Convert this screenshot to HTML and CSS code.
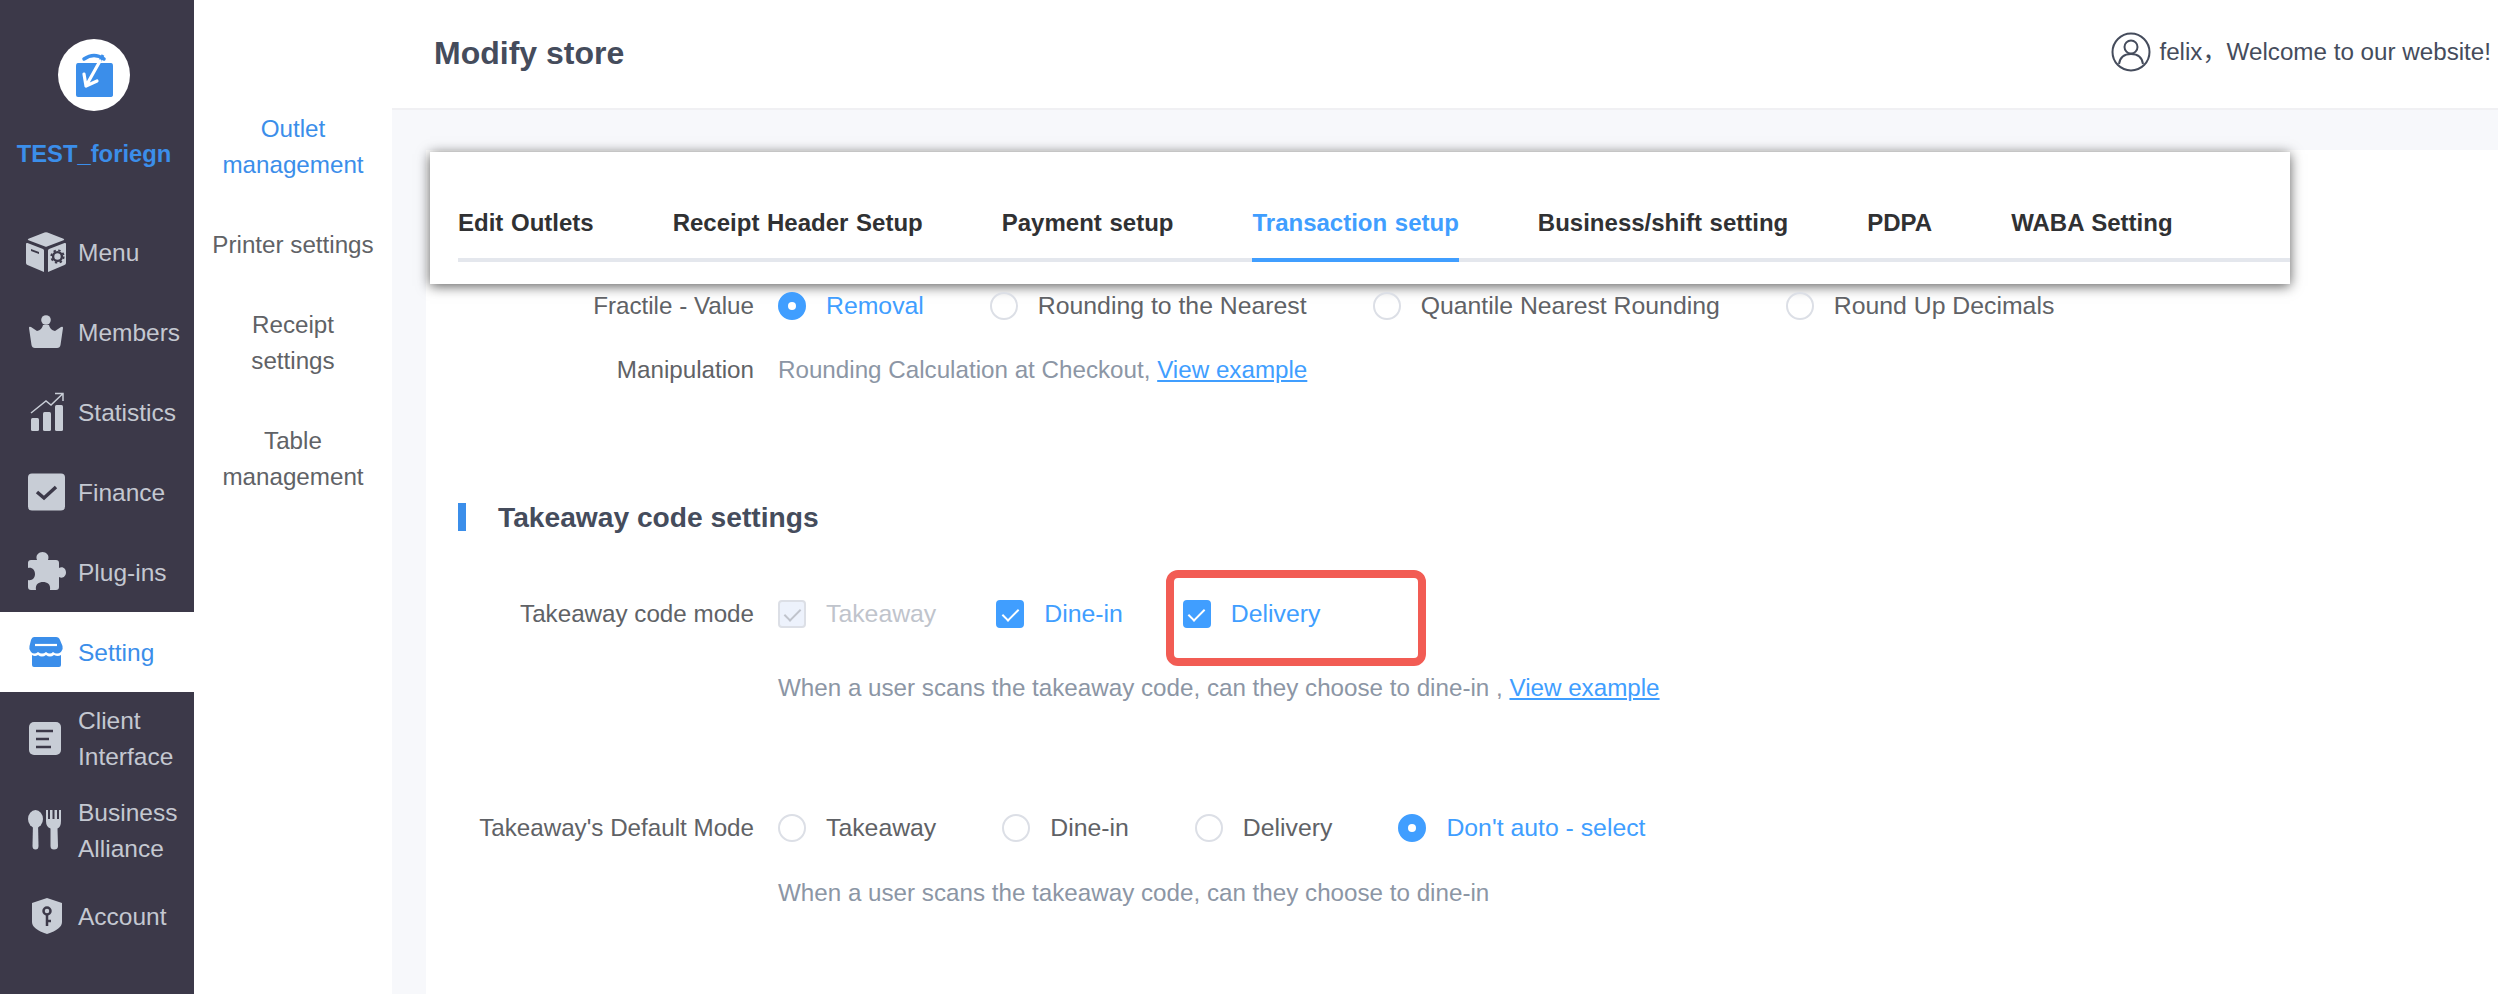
FILE: index.html
```html
<!DOCTYPE html>
<html lang="en">

<head>
    <meta charset="UTF-8">
    <meta name="viewport" content="width=device-width, initial-scale=1.0">
    <title>Modify store</title>
    <link rel="stylesheet" href="styles.css">
</head>

<body>
    <div class="sidebar">
        <div class="brand">
            <div class="brand-logo">
                <svg width="72" height="72" viewBox="0 0 72 72">
                    <path d="M26 20 Q36 13 46 20" fill="none" stroke="#3b8eea" stroke-width="3.5" stroke-linecap="round" />
                    <path d="M20 24 H53 Q55 24 55 27 V56 Q55 58 52 58 H20 Q18 58 18 56 V27 Q18 24 20 24 Z" fill="#3b8eea" />
                    <path d="M45 16 L42 22" stroke="#3b8eea" stroke-width="3" fill="none" />
                    <path d="M42 22 L28 47 M26 35 L28 47 L39 42" stroke="#fff" stroke-width="3.2" fill="none" stroke-linecap="round" stroke-linejoin="round" />
                </svg>
            </div>
            <div class="brand-name">TEST_foriegn</div>
        </div>

        <a class="side-item">
            <svg class="side-icon" viewBox="0 0 40 40">
                <path d="M18.5 .6 Q20 0 21.500 .6 L37.500 6.800 Q39 7.500 37.500 8.200 L21 14.500 Q20 15 19 14.500 L2.500 8.200 Q1 7.500 2.500 6.800 Z" />
                <path fill-rule="evenodd" d="M0 12 Q0 10.500 1.500 11 L17 17 Q18 17.500 18 18.500 V40 L1.500 33 Q0 32.500 0 31 Z M5 17 L5 19 L13 22 L13 20 Z" />
                <path d="M22 18.500 Q22 17.500 23 17 L38.500 11 Q40 10.500 40 12 V31 Q40 32.500 38.500 33 L22 40 Z" />
                <circle cx="31.500" cy="24.500" r="4.400" fill="none" stroke="#3c3949" stroke-width="2.400" />
                <circle cx="31.500" cy="24.500" r="6.200" fill="none" stroke="#3c3949" stroke-width="1.800" stroke-dasharray="2.400 2.470" />
            </svg>
            <span>Menu</span>
        </a>
        <a class="side-item">
            <svg class="side-icon" viewBox="0 0 40 40">
                <circle cx="20" cy="8" r="4.800" />
                <path d="M3 16 Q3 14 5 15 L11 19 Q16 18 17 13 H23 Q24 18 29 19 L35 15 Q37 14 37 16 L34.500 33 Q34 36 31 36 H9 Q6 36 5.500 33 Z" />
            </svg>
            <span>Members</span>
        </a>
        <a class="side-item">
            <svg class="side-icon" viewBox="0 0 40 40">
                <rect x="5" y="26" width="8" height="13" rx="1.500" />
                <rect x="17" y="20" width="8" height="19" rx="1.500" />
                <rect x="29" y="13" width="8" height="26" rx="1.500" />
                <path d="M5 21 L20 9 L25 13 L36.500 2 M29 1.500 H37 V9" fill="none" stroke="#c8cdd6" stroke-width="1.500" />
            </svg>
            <span>Statistics</span>
        </a>
        <a class="side-item">
            <svg class="side-icon" viewBox="0 0 40 40">
                <rect x="2" y="1.500" width="37" height="37" rx="4" />
                <path d="M11 20 L18 26 L30 15" fill="none" stroke="#3c3949" stroke-width="3.500" />
            </svg>
            <span>Finance</span>
        </a>
        <a class="side-item">
            <svg class="side-icon" viewBox="0 0 40 40">
                <path d="M2 11 Q2 8 5 8 H11 C9 3 13 0 16.500 0 C20 0 24 3 22 8 H30 Q33 8 33 11 V16 C37 14 40 17 40 20.500 C40 24 37 27 33 25 V35 Q33 38 30 38 H24 C25 32 21 30 17 30 C13 30 9 32 10 38 H5 Q2 38 2 35 V28 C6 29 9 26 9 22 C9 18 6 15 2 16 Z" />
            </svg>
            <span>Plug-ins</span>
        </a>
        <a class="side-item side-item-active">
            <svg class="side-icon" viewBox="0 0 40 40">
                <path d="M8 5 H30 Q33 5 34 8 L36.500 14 Q37.500 17 35 20 Q31 23 27 20 Q24 23 20 20 Q16 23 12 20 Q8 23 5 20 Q2.500 17 3.500 14 L5 8 Q6 5 8 5 Z" />
                <path d="M6 23 Q9 25 12 23 Q16 26 20 23 Q24 26 28 23 Q32 25 35 23 V33 Q35 35 33 35 H8 Q6 35 6 33 Z" />
                <path d="M9 13 H31" stroke="#fff" stroke-width="2.200" fill="none" />
            </svg>
            <span>Setting</span>
        </a>
        <a class="side-item side-item-tall">
            <svg class="side-icon" viewBox="0 0 40 40">
                <rect x="3" y="4" width="32" height="33" rx="5" />
                <path d="M10 13 H27 M10 21 H23 M10 29 H25" fill="none" stroke="#3c3949" stroke-width="2.500" />
            </svg>
            <span>Client<br>Interface</span>
        </a>
        <a class="side-item side-item-tall">
            <svg class="side-icon" viewBox="0 0 40 40">
                <ellipse cx="9.500" cy="9" rx="7.500" ry="9" />
                <path d="M7 12 H12 L12.500 36 Q12.500 39.500 9.500 39.500 Q6.500 39.500 6.500 36 Z" />
                <path d="M20 0 H22 V9 H24 V0 H26.500 V9 H28.500 V0 H31 V9 H33 V0 H35 V11 Q35 17 31.500 18.500 L32 36 Q32 39.500 28 39.500 Q24.500 39.500 24.500 36 L24.500 18.500 Q20 17 20 11 Z" />
            </svg>
            <span>Business<br>Alliance</span>
        </a>
        <a class="side-item">
            <svg class="side-icon" viewBox="0 0 40 40">
                <path d="M21 2 L36 7 V26 Q36 33 21 38 Q6 33 6 26 V7 Z" />
                <circle cx="21" cy="15" r="3.500" fill="none" stroke="#3c3949" stroke-width="2.500" />
                <path d="M21 18 V30 M21 25 H25" fill="none" stroke="#3c3949" stroke-width="2.500" />
            </svg>
            <span>Account</span>
        </a>
    </div>

    <div class="subnav">
        <a class="subnav-item subnav-item-active">Outlet<br>management</a>
        <a class="subnav-item">Printer settings</a>
        <a class="subnav-item">Receipt<br>settings</a>
        <a class="subnav-item">Table<br>management</a>
    </div>

    <div class="main">
        <div class="topbar">
            <h1>Modify store</h1>
            <div class="user">
                <svg width="40" height="40" viewBox="0 0 40 40" fill="none" stroke="#454c5c" stroke-width="2">
                    <circle cx="20" cy="20" r="18.500" />
                    <circle cx="20" cy="15" r="6.500" />
                    <path d="M8 32 C9 25 14 22 20 22 C26 22 31 25 32 32" />
                </svg>
                <span>felix，Welcome to our website!</span>
            </div>
        </div>

        <div class="content">
            <div class="panel">
                <div class="tabs-card">
                    <div class="tabs">
                        <a class="tab">Edit Outlets</a>
                        <a class="tab">Receipt Header Setup</a>
                        <a class="tab">Payment setup</a>
                        <a class="tab tab-active">Transaction setup</a>
                        <a class="tab">Business/shift setting</a>
                        <a class="tab">PDPA</a>
                        <a class="tab">WABA Setting</a>
                    </div>
                </div>

                <div class="row row-fractile">
                    <div class="row-label">Fractile - Value</div>
                    <div class="options">
                        <label class="option option-on"><i class="radio"></i>Removal</label>
                        <label class="option"><i class="radio"></i>Rounding to the Nearest</label>
                        <label class="option"><i class="radio"></i>Quantile Nearest Rounding</label>
                        <label class="option"><i class="radio"></i>Round Up Decimals</label>
                    </div>
                </div>
                <div class="row row-manipulation">
                    <div class="row-label">Manipulation</div>
                    <div class="hint">Rounding Calculation at Checkout, <a class="link">View example</a></div>
                </div>

                <h2 class="section-title">Takeaway code settings</h2>

                <div class="row row-mode">
                    <div class="row-label">Takeaway code mode</div>
                    <div class="options options-check">
                        <label class="option option-off"><i class="check"></i>Takeaway</label>
                        <label class="option option-on"><i class="check"></i>Dine-in</label>
                        <label class="option option-on option-marked"><i class="check"></i>Delivery</label>
                    </div>
                </div>
                <div class="hint hint-mode">When a user scans the takeaway code, can they choose to dine-in , <a class="link">View example</a></div>

                <div class="row row-default">
                    <div class="row-label">Takeaway's Default Mode</div>
                    <div class="options">
                        <label class="option"><i class="radio"></i>Takeaway</label>
                        <label class="option"><i class="radio"></i>Dine-in</label>
                        <label class="option"><i class="radio"></i>Delivery</label>
                        <label class="option option-on"><i class="radio"></i>Don't auto - select</label>
                    </div>
                </div>
                <div class="hint hint-default">When a user scans the takeaway code, can they choose to dine-in</div>
            </div>
        </div>
    </div>
</body>

</html>
```

FILE: styles.css
```css
* {
    margin: 0;
    padding: 0;
    box-sizing: border-box;
}

body {
    font-family: "Liberation Sans", "Noto Sans CJK SC", Arial, sans-serif;
    font-size: 24.2px;
    line-height: 36px;
    color: #606266;
    background-color: #ffffff;
    display: flex;
    height: 100vh;
    overflow: hidden;
}

.sidebar {
    width: 194px;
    flex-shrink: 0;
    background-color: #3c3949;
    color: #c4c8d1;
    font-size: 24.5px;
}

.brand {
    height: 212px;
    padding: 39px 6px 0 0;
    text-align: center;
}

.brand-logo {
    width: 72px;
    height: 72px;
    margin: 0 auto 25px;
    background-color: #ffffff;
    border-radius: 50%;
}

.brand-logo svg {
    display: block;
}

.brand-name {
    color: #3b8eea;
    font-size: 23.8px;
    font-weight: bold;
}

.side-item {
    display: flex;
    align-items: center;
    gap: 12px;
    height: 80px;
    padding-left: 26px;
}

.side-item span {
    padding-top: 2px;
}

.side-item-tall {
    height: 92px;
}

.side-icon {
    width: 40px;
    height: 40px;
    flex-shrink: 0;
    fill: #c8cdd6;
}

.side-item-active {
    background-color: #ffffff;
    color: #3b8eea;
}

.side-item-active .side-icon {
    fill: #3b8eea;
}

.subnav {
    width: 198px;
    flex-shrink: 0;
    padding-top: 89px;
    text-align: center;
}

.subnav-item {
    display: block;
    padding: 22px 0;
}

.subnav-item-active {
    color: #3b8eea;
}

.main {
    flex: 1;
    min-width: 0;
    display: flex;
    flex-direction: column;
}

.topbar {
    height: 110px;
    flex-shrink: 0;
    display: flex;
    justify-content: space-between;
    align-items: center;
    padding: 0 7px 4px 42px;
    border-bottom: 2px solid #f0f0f3;
}

.topbar h1 {
    padding-top: 2px;
    font-size: 32px;
    font-weight: bold;
    color: #454c5c;
}

.user {
    display: flex;
    align-items: center;
    gap: 8px;
    color: #454c5c;
}

.content {
    flex: 1;
    background-color: #f7f8fb;
    padding: 40px 0 0 34px;
}

.panel {
    height: 100%;
    background-color: #ffffff;
    padding-top: 2px;
}

.tabs-card {
    width: 1860px;
    height: 132px;
    margin-left: 4px;
    padding: 50px 0 0 28px;
    background-color: #ffffff;
    box-shadow: 0 2px 12px rgba(0, 0, 0, 0.65);
}

.tabs {
    display: flex;
    gap: 79px;
    height: 60px;
    border-bottom: 4px solid #e4e7ed;
}

.tab {
    height: 60px;
    padding-top: 3px;
    font-size: 24px;
    word-spacing: 1px;
    font-weight: bold;
    color: #303133;
}

.tab-active {
    color: #409eff;
    border-bottom: 4px solid #409eff;
}

.row {
    display: flex;
    align-items: center;
    height: 36px;
}

.row-label {
    width: 328px;
    margin-right: 24px;
    flex-shrink: 0;
    text-align: right;
}

.row-fractile {
    margin-top: 4px;
}

.row-manipulation {
    margin-top: 28px;
}

.row-mode {
    margin-top: 65px;
}

.row-default {
    margin-top: 104px;
}

.options {
    display: flex;
    gap: 66px;
}

.options-check {
    gap: 60px;
}

.option {
    position: relative;
    display: flex;
    align-items: center;
    gap: 20px;
    font-size: 24.8px;
}

.option-on {
    color: #409eff;
}

.option-off {
    color: #c0c4cc;
}

.radio {
    width: 28px;
    height: 28px;
    display: flex;
    align-items: center;
    justify-content: center;
    border: 2px solid #dcdfe6;
    border-radius: 50%;
}

.option-on .radio {
    background-color: #409eff;
    border-color: #409eff;
}

.option-on .radio::after {
    content: "";
    width: 8px;
    height: 8px;
    background-color: #ffffff;
    border-radius: 50%;
}

.check {
    width: 28px;
    height: 28px;
    display: flex;
    align-items: center;
    justify-content: center;
    border: 2px solid #409eff;
    border-radius: 4px;
    background-color: #409eff;
}

.check::after {
    content: "";
    width: 7px;
    height: 14px;
    margin-top: -3px;
    border: solid #ffffff;
    border-width: 0 2px 2px 0;
    transform: rotate(45deg);
}

.option-off .check {
    background-color: #edf2fc;
    border-color: #dcdfe6;
}

.option-off .check::after {
    border-color: #c0c4cc;
}

/* red annotation box drawn over the delivery option */
.option-marked::before {
    content: "";
    position: absolute;
    box-sizing: border-box;
    left: -17px;
    top: -26px;
    width: 260px;
    height: 96px;
    border: 8px solid #f25c54;
    border-radius: 12px;
}

.hint {
    color: #8c96a5;
}

.hint-mode {
    margin: 38px 0 0 352px;
}

.hint-default {
    margin: 29px 0 0 352px;
}

.link {
    color: #409eff;
    text-decoration: underline;
}

.section-title {
    height: 28px;
    margin: 115px 0 0 32px;
    padding-left: 32px;
    font-size: 28.2px;
    line-height: 28px;
    font-weight: bold;
    color: #454c5c;
    border-left: 8px solid #3b8eea;
}
```
